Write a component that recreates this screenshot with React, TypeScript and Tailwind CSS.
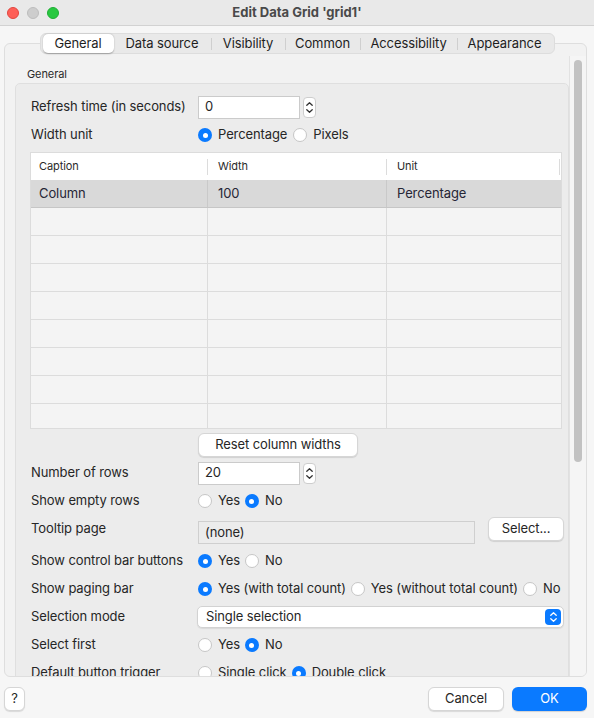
import React from "react";

function Radio({ checked, label }: { checked?: boolean; label: string }) {
  return (
    <span className="flex items-center gap-[6px]">
      {checked ? (
        <span className="w-[14px] h-[14px] rounded-full bg-[#0a7aff] flex items-center justify-center shrink-0">
          <span className="w-[5px] h-[5px] rounded-full bg-white" />
        </span>
      ) : (
        <span className="w-[14px] h-[14px] rounded-full bg-white border border-[#c6c6c6] shrink-0" />
      )}
      <span>{label}</span>
    </span>
  );
}

function Stepper() {
  return (
    <span className="ml-[3px] w-[13px] h-[21px] rounded-[4px] bg-white border border-[#cdcdcd] flex flex-col items-center justify-center gap-[3px]">
      <svg width="7" height="4" viewBox="0 0 7 4">
        <path d="M0.8 3.3 L3.5 0.8 L6.2 3.3" fill="none" stroke="#333" strokeWidth="1.3" strokeLinecap="round" strokeLinejoin="round" />
      </svg>
      <svg width="7" height="4" viewBox="0 0 7 4">
        <path d="M0.8 0.7 L3.5 3.2 L6.2 0.7" fill="none" stroke="#333" strokeWidth="1.3" strokeLinecap="round" strokeLinejoin="round" />
      </svg>
    </span>
  );
}

function Row({ label, children }: { label: string; children?: React.ReactNode }) {
  return (
    <div className="h-[28px] flex items-center shrink-0">
      <div className="w-[167px] shrink-0">{label}</div>
      <div className="flex items-center flex-1">{children}</div>
    </div>
  );
}

function Btn({ children, className }: { children: React.ReactNode; className?: string }) {
  return (
    <div
      className={
        "h-[24px] rounded-[6px] bg-white border border-[#d6d6d6] shadow-[0_1px_1px_rgba(0,0,0,0.12)] flex items-center justify-center " +
        (className || "")
      }
    >
      {children}
    </div>
  );
}

export default function App() {
  const tabs = [
    { t: "Data source", w: "w-[97px]" },
    { t: "Visibility", w: "w-[74px]" },
    { t: "Common", w: "w-[75px]" },
    { t: "Accessibility", w: "w-[97px]" },
    { t: "Appearance", w: "w-[95px]" },
  ];
  const emptyRows = [0, 1, 2, 3, 4, 5, 6, 7];
  return (
    <div className="w-[594px] h-[718px] flex flex-col bg-[#f6f6f6] text-[13px] tracking-[-0.1px] text-[#262626] font-['Inter','Noto_Sans',sans-serif] overflow-hidden">
      {/* title bar */}
      <div className="h-[26px] shrink-0 bg-[#e9e9e9] border-b border-[#d2d2d2] grid grid-cols-[1fr_auto_1fr] items-center">
        <div className="flex items-center gap-[8px] pl-[7px]">
          <span className="w-[12px] h-[12px] rounded-full bg-[#fe5f57] border border-[#e2463f]" />
          <span className="w-[12px] h-[12px] rounded-full bg-[#cdcdcd] border border-[#bdbdbd]" />
          <span className="w-[12px] h-[12px] rounded-full bg-[#28c840] border border-[#1fae34]" />
        </div>
        <div className="font-bold text-[#4a4a4a] text-[13px] tracking-normal">Edit Data Grid 'grid1'</div>
        <div />
      </div>

      {/* tabs */}
      <div className="flex justify-center mt-[7px] relative z-10 shrink-0">
        <div className="w-[515px] h-[21px] p-[2px] rounded-[6px] bg-[#e9e9e9] border border-[#dddddd] flex items-center">
          <div className="w-[71px] h-[19px] rounded-[5px] bg-white shadow-[0_0.5px_1.5px_rgba(0,0,0,0.3)] flex items-center justify-center text-[#1e1e1e]">
            General
          </div>
          {tabs.map((tb, i) => (
            <div key={tb.t} className={"h-[19px] flex items-center relative " + tb.w}>
              {i > 0 && <span className="w-[1px] h-[12px] bg-[#cfcfcf]" />}
              <span className="flex-1 text-center text-[#1e1e1e]">{tb.t}</span>
            </div>
          ))}
        </div>
      </div>

      {/* panel */}
      <div className="ml-[4px] mr-[7px] -mt-[11px] h-[634px] shrink-0 rounded-[6px] border border-[#dedede] bg-[#f2f2f2] flex overflow-hidden">
        <div className="flex-1 flex flex-col overflow-hidden">
          <div className="mt-[23px] pl-[22px] h-[14px] leading-[14px] text-[11px] text-[#2a2a2a]">General</div>
          <div className="ml-[10px] mt-[2px] h-[700px] shrink-0 rounded-[5px] border border-[#dfdfdf] bg-[#ececec] flex flex-col pl-[15px] pt-[9px]">
            <Row label="Refresh time (in seconds)">
              <div className="w-[102px] h-[23px] bg-white border border-[#cbcbcb] flex items-center px-[6px]">0</div>
              <Stepper />
            </Row>
            <Row label="Width unit">
              <div className="flex items-center gap-[6px] pl-[0px]">
                <Radio checked label="Percentage" />
                <Radio label="Pixels" />
              </div>
            </Row>
            {/* table */}
            <div className="-ml-[1px] mr-[6px] mt-[3px] h-[277px] shrink-0 overflow-hidden border border-[#dcdcdc] bg-[#f4f4f4]">
              <div className="h-[27px] bg-white grid grid-cols-[176px_179px_1fr] items-center text-[11px] text-[#2a2a2a]">
                <div className="pl-[8px]">Caption</div>
                <div className="flex items-center">
                  <span className="w-[1px] h-[16px] bg-[#dcdcdc]" />
                  <span className="pl-[10px]">Width</span>
                </div>
                <div className="flex items-center">
                  <span className="w-[1px] h-[16px] bg-[#dcdcdc]" />
                  <span className="pl-[10px] flex-1">Unit</span>
                  <span className="w-[1px] h-[16px] bg-[#dcdcdc] mr-[1px]" />
                </div>
              </div>
              <div className="h-[28px] bg-[#d9d9d9] border-b border-[#c6c6c6] grid grid-cols-[176px_179px_1fr] items-center text-[13px] text-[#262636]">
                <div className="pl-[8px]">Column</div>
                <div className="h-full border-l border-[#c9c9c9] flex items-center pl-[10px]">100</div>
                <div className="h-full border-l border-[#c9c9c9] flex items-center pl-[10px]">Percentage</div>
              </div>
              {emptyRows.map((r) => (
                <div key={r} className="h-[28px] border-b border-[#dcdcdc] grid grid-cols-[176px_179px_1fr]">
                  <div />
                  <div className="border-l border-[#dcdcdc]" />
                  <div className="border-l border-[#dcdcdc]" />
                </div>
              ))}
            </div>
            <div className="flex mt-[4px] shrink-0">
              <div className="w-[167px]" />
              <Btn className="w-[160px]">Reset column widths</Btn>
            </div>
            <div className="h-[2px] shrink-0" />
            <Row label="Number of rows">
              <div className="w-[102px] h-[23px] bg-white border border-[#cbcbcb] flex items-center px-[6px]">20</div>
              <Stepper />
            </Row>
            <Row label="Show empty rows">
              <div className="flex items-center gap-[5px]">
                <Radio label="Yes" />
                <Radio checked label="No" />
              </div>
            </Row>
            <Row label="Tooltip page">
              <div className="w-[277px] h-[23px] mt-[7px] bg-[#ececec] border border-[#cfcfcf] flex items-center px-[6px] text-[#262626]">
                (none)
              </div>
              <Btn className="ml-[13px] w-[76px]">Select...</Btn>
            </Row>
            <div className="h-[4px] shrink-0" />
            <Row label="Show control bar buttons">
              <div className="flex items-center gap-[5px]">
                <Radio checked label="Yes" />
                <Radio label="No" />
              </div>
            </Row>
            <Row label="Show paging bar">
              <div className="flex items-center gap-[5px]">
                <Radio checked label="Yes (with total count)" />
                <Radio label="Yes (without total count)" />
                <Radio label="No" />
              </div>
            </Row>
            <Row label="Selection mode">
              <div className="-ml-[1px] w-[367px] h-[22px] rounded-[5px] bg-white border border-[#d2d2d2] shadow-[0_1px_1px_rgba(0,0,0,0.08)] flex items-center pl-[8px] pr-[2px]">
                <span className="flex-1">Single selection</span>
                <span className="w-[16px] h-[16px] rounded-[4px] bg-[#0a7aff] flex flex-col items-center justify-center gap-[2px]">
                  <svg width="7" height="4" viewBox="0 0 7 4">
                    <path d="M0.8 3.3 L3.5 0.8 L6.2 3.3" fill="none" stroke="#fff" strokeWidth="1.3" strokeLinecap="round" strokeLinejoin="round" />
                  </svg>
                  <svg width="7" height="4" viewBox="0 0 7 4">
                    <path d="M0.8 0.7 L3.5 3.2 L6.2 0.7" fill="none" stroke="#fff" strokeWidth="1.3" strokeLinecap="round" strokeLinejoin="round" />
                  </svg>
                </span>
              </div>
            </Row>
            <Row label="Select first">
              <div className="flex items-center gap-[5px]">
                <Radio label="Yes" />
                <Radio checked label="No" />
              </div>
            </Row>
            <Row label="Default button trigger">
              <div className="flex items-center gap-[5px]">
                <Radio label="Single click" />
                <Radio checked label="Double click" />
              </div>
            </Row>
          </div>
        </div>
        {/* scrollbar */}
        <div className="w-[17px] shrink-0 mt-[12px] border-l border-[#e2e2e2] bg-[#f5f5f5] flex flex-col">
          <div className="ml-[4px] mt-[4px] w-[8px] h-[402px] rounded-full bg-[#c2c2c2]" />
        </div>
      </div>

      {/* bottom buttons */}
      <div className="mt-[10px] pl-[4px] pr-[7px] flex items-center shrink-0">
        <Btn className="w-[21px]">?</Btn>
        <div className="flex-1" />
        <Btn className="w-[76px]">Cancel</Btn>
        <div className="ml-[8px] w-[75px] h-[24px] rounded-[6px] bg-[#0a7aff] text-white flex items-center justify-center shadow-[0_1px_1px_rgba(0,0,0,0.15)]">
          OK
        </div>
      </div>
    </div>
  );
}
